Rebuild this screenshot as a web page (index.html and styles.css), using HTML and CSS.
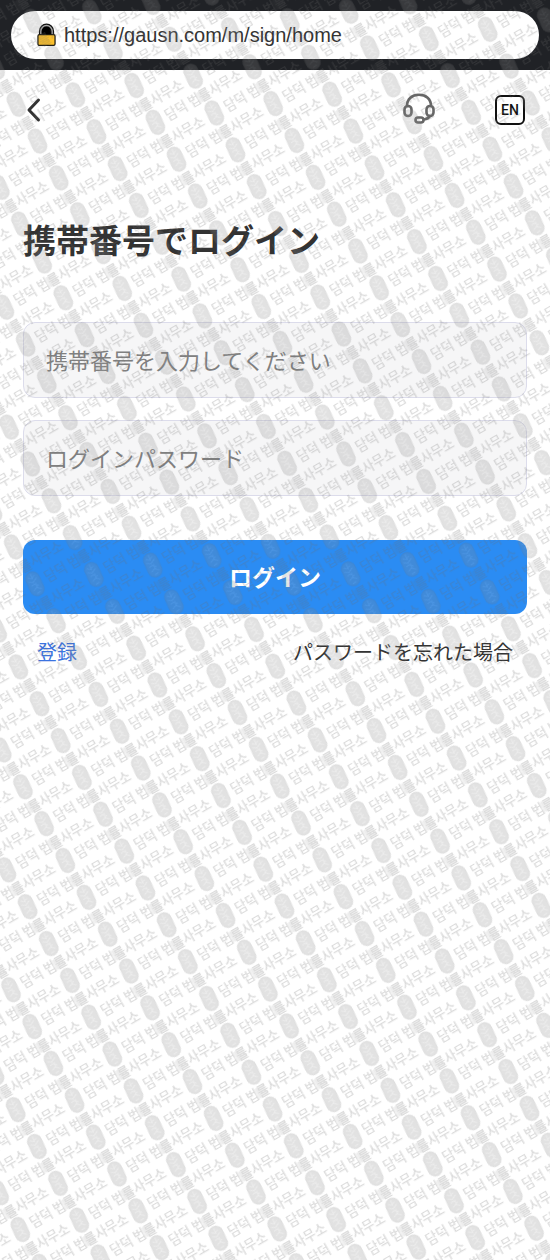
FILE: index.html
```html
<!DOCTYPE html>
<html lang="ja">
<head>
  <meta charset="UTF-8" />
  <meta name="viewport" content="width=device-width, initial-scale=1.0" />
  <title>ログイン</title>
  <link rel="stylesheet" href="styles.css">
</head>
<body>
  <div class="browser-bar">
    <div class="address">
      <svg class="lock" viewBox="0 0 20 24" aria-hidden="true">
        <path d="M3.5 13V8a6.5 6.5 0 0 1 13 0v5z" fill="#000" stroke="#111" stroke-width="3"/>
        <path d="M4 12V8a6 6 0 0 1 12 0v4" fill="none" stroke="#aaa" stroke-width="1.4"/>
        <rect x="1" y="11.500" width="18" height="11.500" rx="1.500" fill="#fbc02d" stroke="#1c1a12" stroke-width="1.300"/>
      </svg>
      <span>https://gausn.com/m/sign/home</span>
    </div>
  </div>

  <header class="nav">
    <button class="icon-btn" type="button" aria-label="戻る">
      <svg class="back" viewBox="0 0 16 26"><path d="M13.500 3 4 13l9.500 10" fill="none" stroke="#333" stroke-width="3" stroke-linecap="round" stroke-linejoin="round"/></svg>
    </button>
    <div class="nav-right">
      <button class="icon-btn" type="button" aria-label="サポート">
        <svg class="headset" viewBox="0 0 32 32" fill="none" stroke="#666" stroke-width="2.600" stroke-linecap="round">
          <path d="M4 13C4 6 9 1.800 16 1.800S28 6 28 13"/>
          <rect x="1.500" y="13" width="7" height="10" rx="3.500"/>
          <rect x="23.500" y="13" width="7" height="10" rx="3.500"/>
          <path d="M27 23c-1.500 2.500-3 3-6 3.500"/>
          <rect x="12.500" y="24.500" width="8" height="5" rx="2.500"/>
        </svg>
      </button>
      <button class="lang" type="button">EN</button>
    </div>
  </header>

  <main class="login">
    <h1>携帯番号でログイン</h1>
    <form>
      <input class="field" type="tel" aria-label="携帯番号" placeholder="携帯番号を入力してください">
      <input class="field" type="password" aria-label="パスワード" placeholder="ログインパスワード">
      <button class="submit" type="button">ログイン</button>
    </form>
    <div class="links">
      <a class="register" href="#">登録</a>
      <a href="#">パスワードを忘れた場合</a>
    </div>
  </main>

  <!-- watermark over the whole page -->
  <svg class="watermark" aria-hidden="true">
    <defs>
      <g id="mark">
        <g transform="rotate(5)">
          <rect x="-7" y="-12.500" width="14" height="25" rx="7" fill="#888" stroke="#777" stroke-width="1"/>
          <path d="M-4-8l3 2 4-2M-5-4l4 2 5-3M-4 1l3-1 4 3M-4 6l4-2 4 3M-2 10l4-1M0-11v6M1-1v6" fill="none" stroke="#b4b4b4" stroke-width="1"/>
        </g>
        <rect x="50" y="-5" width="10" height="11" rx="1" fill="#6e6e6e" opacity=".5"/>
        <text x="12" y="5">담덕 법률사무소</text>
      </g>
      <pattern id="tile" width="111.500" height="42.500" patternUnits="userSpaceOnUse" patternTransform="translate(237.500 712.500) rotate(-29.900) translate(-10 -14)">
        <use href="#mark" x="10" y="14"/>
        <use href="#mark" x="65.750" y="35.250"/>
        <use href="#mark" x="-45.750" y="35.250"/>
        <use href="#mark" x="65.750" y="-7.250"/>
        <use href="#mark" x="-45.750" y="-7.250"/>
      </pattern>
    </defs>
    <rect width="100%" height="100%" fill="url(#tile)"/>
  </svg>
</body>
</html>
```

FILE: styles.css
```css
*{margin:0;padding:0;box-sizing:border-box}
body{position:relative;min-height:100vh;background:#fff;color:#333;font-family:"Noto Sans CJK JP",sans-serif;overflow-x:hidden}
button{border:none;background:none;font-family:inherit;cursor:pointer}
a{color:inherit;text-decoration:none}
svg{display:block}

.browser-bar{padding:11px;background:#202226}
.address{display:flex;align-items:center;gap:8px;height:48px;padding:0 26px;border-radius:24px;background:#fff;font:20px/24px "Liberation Sans",sans-serif}
.lock{width:19px;height:24px}

.nav{display:flex;align-items:center;justify-content:space-between;height:80px;padding:0 25px}
.nav-right{display:flex;align-items:center;gap:60px}
.back{width:16px;height:26px}
.headset{width:32px;height:32px;margin-bottom:2px}
.lang{width:30px;height:30px;border:2px solid #111;border-radius:6px;color:#111;font:500 14px/26px Roboto,sans-serif}

.login{padding:64px 23px 0}
h1{font-size:33px;line-height:50px;font-weight:700}
form{display:flex;flex-direction:column;gap:22px;margin-top:58px}
.field{width:100%;height:76px;padding:0 22px 2px;border:1px solid #dcdceb;border-radius:12px;background:#f6f6f7;color:#333;font:22px/32px "Noto Sans CJK JP",sans-serif;outline:none}
.field::placeholder{color:#808080;opacity:1}
.submit{height:74px;margin-top:22px;padding-bottom:2px;border-radius:12px;background:#2b8cf3;color:#fff;font-size:23px;font-weight:700}
.links{display:flex;justify-content:space-between;padding:22px 14px;font-size:20px;line-height:32px}
.register{color:#3b73e0}

.watermark{position:absolute;top:0;left:0;width:100%;height:100%;opacity:.24;pointer-events:none}
.watermark text{font:500 13px "Noto Sans CJK KR",sans-serif;fill:#6e6e6e}
```
